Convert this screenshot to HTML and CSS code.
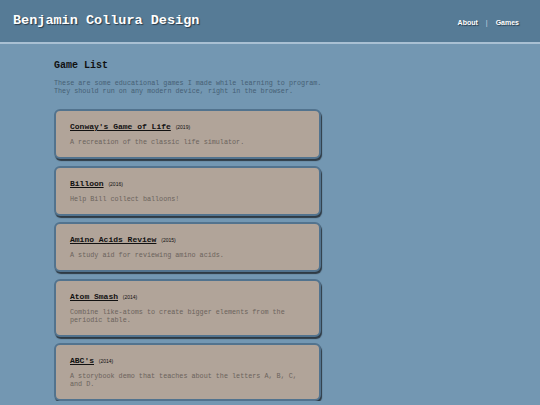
FILE: index.html
```html
<!DOCTYPE html>
<html>
<head>
<meta charset="utf-8">
<link rel="stylesheet" href="styles.css">
</head>
<body>
<header class="site-header">
  <div class="brand">Benjamin Collura Design</div>
  <nav class="nav">
    <a href="#">About</a>
    <span class="sep">|</span>
    <a href="#">Games</a>
  </nav>
</header>
<main class="content">
  <h1 class="page-title">Game List</h1>
  <p class="intro">These are some educational games I made while learning to program.<br>They should run on any modern device, right in the browser.</p>
  <ul class="games">
    <li class="card">
      <div class="card-title"><a href="#">Conway's Game of Life</a> <span class="year">(2019)</span></div>
      <p class="card-desc">A recreation of the classic life simulator.</p>
    </li>
    <li class="card">
      <div class="card-title"><a href="#">Billoon</a> <span class="year">(2016)</span></div>
      <p class="card-desc">Help Bill collect balloons!</p>
    </li>
    <li class="card">
      <div class="card-title"><a href="#">Amino Acids Review</a> <span class="year">(2015)</span></div>
      <p class="card-desc">A study aid for reviewing amino acids.</p>
    </li>
    <li class="card">
      <div class="card-title"><a href="#">Atom Smash</a> <span class="year">(2014)</span></div>
      <p class="card-desc">Combine like-atoms to create bigger elements from the periodic table.</p>
    </li>
    <li class="card">
      <div class="card-title"><a href="#">ABC's</a> <span class="year">(2014)</span></div>
      <p class="card-desc">A storybook demo that teaches about the letters A, B, C, and D.</p>
    </li>
  </ul>
</main>
</body>
</html>
```
FILE: styles.css
```css
html, body {
  margin: 0;
  padding: 0;
}
body {
  background: #7397b2;
  font-family: "Liberation Mono", monospace;
  overflow: hidden;
}
.site-header {
  height: 42px;
  background: #567b96;
  border-bottom: 2px solid #a9c0d3;
  display: flex;
  align-items: center;
  justify-content: space-between;
  padding: 0 21px 0 13px;
  box-sizing: content-box;
}
.brand {
  color: #fff;
  font-weight: bold;
  font-size: 13.5px;
  text-shadow: 1px 1px 1px #2a3c4a;
  margin-top: -2px;
}
.nav {
  display: flex;
  gap: 8px;
  align-items: center;
  font-family: "Liberation Sans", Arial, sans-serif;
  font-size: 7px;
  font-weight: bold;
  color: #fff;
  margin-top: 2px;
}
.nav a {
  color: #fff;
  text-decoration: none;
  text-shadow: 1px 1px 1px #2a3c4a;
}
.nav .sep {
  color: #c9d6e0;
  font-weight: normal;
}
.content {
  padding: 0 0 0 54px;
  width: 267px;
}
.page-title {
  font-size: 10px;
  font-weight: bold;
  margin: 16px 0 0 0;
  color: #111;
}
.intro {
  font-size: 6.75px;
  line-height: 8px;
  color: #465f74;
  margin: 8px 0 0 0;
  white-space: nowrap;
}
.games {
  list-style: none;
  margin: 14px 0 0 0;
  padding: 0;
  display: flex;
  flex-direction: column;
  gap: 6.5px;
}
.card {
  background: #b1a499;
  border: 2px solid #52738e;
  border-radius: 6px;
  box-shadow: 1px 2px 1px #2e3a44;
  padding: 11px 14px 11px 14px;
}
.card-title {
  font-size: 8px;
  font-weight: bold;
  line-height: 10px;
}
.card-title a {
  color: #111;
  text-decoration: underline;
}
.year {
  font-family: "Liberation Sans", Arial, sans-serif;
  font-size: 5px;
  font-weight: normal;
  color: #111;
  margin-left: 0;
}
.card-desc {
  margin: 6px 0 0 0;
  font-size: 6.75px;
  line-height: 8px;
  color: #6b635c;
}
```
